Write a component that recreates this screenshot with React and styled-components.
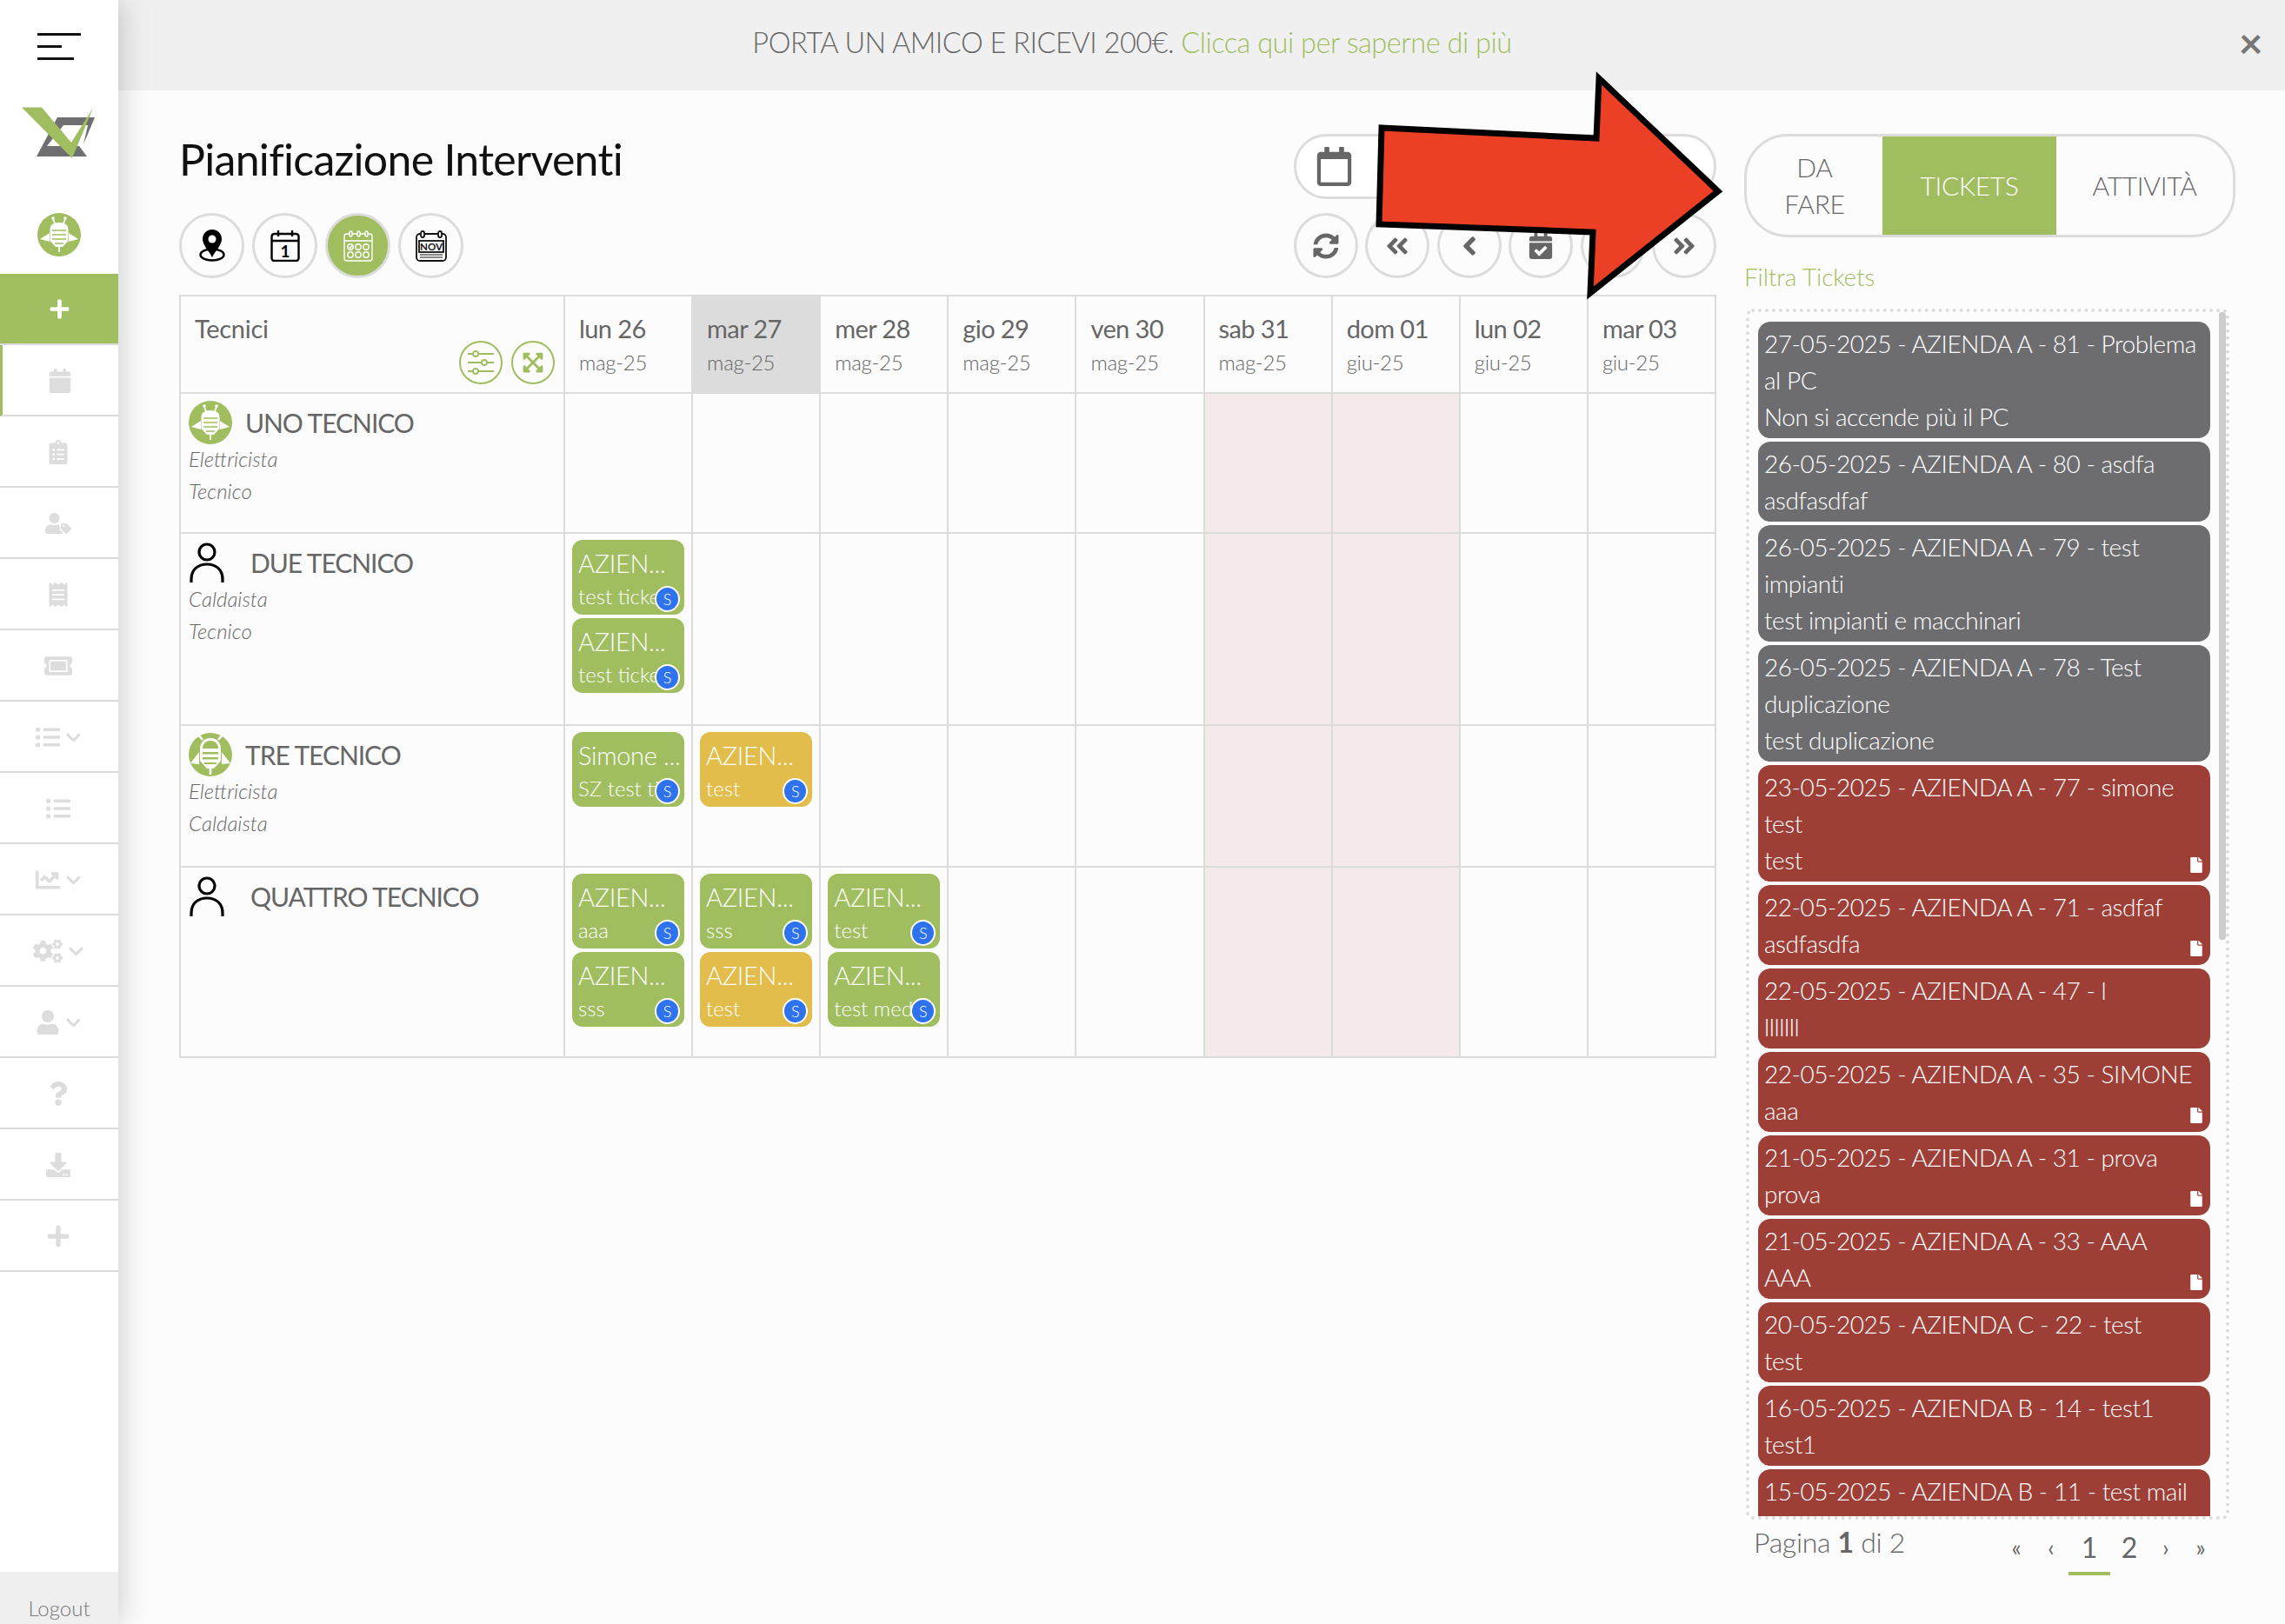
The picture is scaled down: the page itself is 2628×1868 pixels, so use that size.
import React from 'react'
import styled, { createGlobalStyle } from 'styled-components'
import {
  FaPlus, FaCalendar, FaClipboardList, FaUserTag, FaReceipt, FaTicketAlt, FaListUl,
  FaChevronDown, FaChartLine, FaCogs, FaUser, FaQuestion, FaDownload, FaSyncAlt,
  FaAngleDoubleLeft, FaAngleLeft, FaCalendarCheck, FaAngleRight, FaAngleDoubleRight,
  FaRegCalendar, FaExpandArrowsAlt, FaFile,
} from 'react-icons/fa'

const GREEN = '#a0be60'
const LINE = '#dcdcdc'
const TEXT = '#666666'

const GlobalStyle = createGlobalStyle`
  html, body { margin: 0; padding: 0; background: #fcfcfc; }
  * { box-sizing: border-box; }
  body { font-family: Lato, "Open Sans", sans-serif; font-weight: 300; color: ${TEXT}; overflow: hidden; }
`

const Page = styled.div`
  display: flex;
  width: 2628px;
  height: 1868px;
  overflow: hidden;
  position: relative;
`

/* sidebar */
const Sidebar = styled.aside`
  display: flex;
  flex-direction: column;
  flex: 0 0 136px;
  background: #fff;
  box-shadow: 0 0 34px rgba(0, 0, 0, 0.22);
  z-index: 2;
`

const SideTop = styled.div`
  display: flex;
  flex-direction: column;
  align-items: center;
  height: 315px;
  padding-top: 38px;
`

const Burger = styled.div`
  display: flex;
  flex-direction: column;
  gap: 11px;
  width: 50px;
  margin-bottom: 52px;
  span {
    display: block;
    height: 3px;
    background: #111;
  }
  span:nth-child(1) { width: 50px; }
  span:nth-child(2) { width: 28px; }
  span:nth-child(3) { width: 42px; }
`

const SideBee = styled.div`
  margin-top: 62px;
`

const SideAdd = styled.div`
  display: flex;
  align-items: center;
  justify-content: center;
  height: 82px;
  border-bottom: 2px solid ${LINE};
  background: ${GREEN};
  color: #fff;
  font-size: 25px;
`

const SideRow = styled.div`
  display: flex;
  align-items: center;
  justify-content: center;
  gap: 6px;
  height: 82px;
  padding: 2px 2px 0 0;
  border-bottom: 2px solid ${LINE};
  border-left: ${p => (p.$active ? `3px solid ${GREEN}` : '0')};
  color: #dddddd;
  font-size: ${p => p.$size || 28}px;
`

const Chevron = styled(FaChevronDown)`
  font-size: 19px;
`

const Logout = styled.div`
  margin-top: auto;
  height: 60px;
  padding-top: 28px;
  background: #efefef;
  text-align: center;
  font-size: 24px;
  line-height: 28px;
  color: #777;
`

/* main */
const Main = styled.div`
  flex: 1;
  display: flex;
  flex-direction: column;
  min-width: 0;
`

const Banner = styled.div`
  position: relative;
  flex: 0 0 104px;
  display: flex;
  align-items: center;
  justify-content: center;
  padding: 0 160px 8px 0;
  background: #f0f0f0;
  font-size: 32.5px;
  letter-spacing: -0.47px;
  color: #666;
  a { color: ${GREEN}; margin-left: 8px; }
`

const CloseBtn = styled.span`
  position: absolute;
  right: 26px;
  top: 24px;
  font-size: 48px;
  line-height: 50px;
  font-weight: 700;
  color: #777;
`

const Content = styled.div`
  flex: 1;
  display: flex;
  padding: 50px 57px 0 70px;
  gap: 32px;
`

const LeftCol = styled.div`
  flex: 0 0 1768px;
`

const TopBar = styled.div`
  display: flex;
  justify-content: space-between;
  align-items: center;
  height: 75px;
`

const Title = styled.h1`
  margin: 0 0 17px;
  font-size: 50px;
  font-weight: 400;
  letter-spacing: -0.7px;
  color: #111;
`

const DatePill = styled.div`
  display: flex;
  align-items: center;
  width: 486px;
  height: 75px;
  padding-left: 21px;
  border: 3px solid ${LINE};
  border-radius: 38px;
  background: #fff;
  color: ${TEXT};
  font-size: 45px;
`

const ToolBar = styled.div`
  display: flex;
  justify-content: space-between;
  margin: 16px 0 19px;
`

const BtnGroup = styled.div`
  display: flex;
  gap: ${p => p.$gap || 8}px;
`

const RoundBtn = styled.div`
  display: flex;
  align-items: center;
  justify-content: center;
  width: ${p => p.$w || 75}px;
  height: 75px;
  border: 3px solid ${LINE};
  border-radius: 50%;
  background: ${p => (p.$on ? GREEN : 'transparent')};
  color: ${TEXT};
  font-size: ${p => p.$size || 30}px;
`

/* planner table */
const Table = styled.table`
  width: 1768px;
  border-collapse: collapse;
  table-layout: fixed;
  td, th { border: 2px solid ${LINE}; padding: 0; vertical-align: top; }
`

const HeadCell = styled.th`
  height: 112px;
  padding: 19px 0 0 16px !important;
  text-align: left;
  font-weight: 400;
  background: ${p => (p.$today ? '#dcdcdc' : 'transparent')};
`

const TechHead = styled.th`
  position: relative;
  padding: 19px 0 0 16px !important;
  text-align: left;
  font-weight: 400;
  font-size: 29px;
  line-height: 36px;
  letter-spacing: -0.3px;
  color: ${TEXT};
`

const DayName = styled.div`
  font-size: 29px;
  line-height: 36px;
  font-weight: 400;
  letter-spacing: -0.6px;
  color: ${TEXT};
`

const DayMonth = styled.div`
  margin-top: 6px;
  font-size: 24px;
  line-height: 30px;
  font-weight: 300;
  letter-spacing: -0.3px;
  color: ${TEXT};
`

const HeadTools = styled.div`
  position: absolute;
  right: 10px;
  bottom: 9px;
  display: flex;
  gap: 10px;
`

const MiniBtn = styled.div`
  display: flex;
  align-items: center;
  justify-content: center;
  width: 50px;
  height: 50px;
  border: 2px solid ${GREEN};
  border-radius: 50%;
  color: ${GREEN};
  font-size: 26px;
`

const TechCell = styled.td`
  height: ${p => p.$h}px;
  padding: 8px 0 0 9px !important;
`

const TechName = styled.div`
  display: flex;
  align-items: center;
  gap: ${p => p.$gap}px;
  height: 50px;
  margin-bottom: -1px;
  padding-left: ${p => p.$indent || 0}px;
  font-size: 30px;
  font-weight: 400;
  letter-spacing: -1.05px;
  color: ${TEXT};
`

const Role = styled.div`
  font-size: 24px;
  line-height: 36.5px;
  font-style: italic;
  color: ${TEXT};
`

const DayCell = styled.td`
  padding: 7px 8px 0 !important;
  background: ${p => (p.$weekend ? '#f5eaea' : 'transparent')};
`

const Card = styled.div`
  position: relative;
  height: 86px;
  margin-bottom: 4px;
  padding: 9px 0 0 7px;
  border-radius: 12px;
  background: ${p => (p.$yellow ? '#e2bd4b' : GREEN)};
  color: #fff;
  overflow: hidden;
  white-space: nowrap;
`

const CardTitle = styled.div`
  font-size: 29px;
  line-height: 36px;
  letter-spacing: -0.3px;
`

const CardSub = styled.div`
  margin: 5px 22px 0 0;
  overflow: hidden;
  font-size: 24px;
  line-height: 30px;
`

const Badge = styled.span`
  position: absolute;
  right: 5px;
  bottom: 3px;
  display: flex;
  align-items: center;
  justify-content: center;
  width: 29px;
  height: 30px;
  border: 2px solid #fff;
  border-radius: 50%;
  background: #2f72ee;
  color: #fff;
  font-size: 18px;
  line-height: 1;
`

/* right column */
const RightCol = styled.div`
  flex: 0 0 565px;
  display: flex;
  flex-direction: column;
`

const Tabs = styled.div`
  display: flex;
  height: 119px;
  border: 3px solid ${LINE};
  border-radius: 50px;
  overflow: hidden;
`

const Tab = styled.div`
  display: flex;
  align-items: center;
  justify-content: center;
  flex: 0 0 ${p => p.$w}px;
  padding: 0 30px 1px;
  text-align: center;
  font-size: 30px;
  line-height: 42px;
  letter-spacing: -0.3px;
  background: ${p => (p.$on ? GREEN : 'transparent')};
  color: ${p => (p.$on ? '#fff' : TEXT)};
`

const FilterLabel = styled.div`
  margin: 27px 0 19px 0;
  font-size: 28px;
  line-height: 36px;
  letter-spacing: -0.1px;
  color: ${GREEN};
`

const TicketBox = styled.div`
  position: relative;
  width: 556px;
  height: 1393px;
  margin-left: 2px;
  padding: 11px 18px 0 10px;
  border: 4px dotted ${LINE};
  border-radius: 8px;
  overflow: hidden;
`

const Thumb = styled.div`
  position: absolute;
  top: 0;
  right: 0;
  width: 8px;
  height: 722px;
  border-radius: 3px;
  background: #cccccc;
`

const Ticket = styled.div`
  position: relative;
  margin-bottom: 4px;
  padding: 4px 6px 4px 7px;
  border-radius: 14px;
  background: ${p => (p.$late ? '#9e3f37' : '#6d6d6f')};
  color: #fff;
  font-size: 28px;
  line-height: 42px;
  letter-spacing: -0.45px;
`

const FileMark = styled(FaFile)`
  position: absolute;
  right: 7px;
  bottom: 10px;
  font-size: 18px;
`

const Footer = styled.div`
  display: flex;
  justify-content: space-between;
  padding: 3px 20px 0 11px;
`

const PageInfo = styled.div`
  font-size: 32px;
  line-height: 46px;
  letter-spacing: -0.3px;
  color: ${TEXT};
  b { font-weight: 700; }
`

const Pager = styled.div`
  display: flex;
  align-items: flex-start;
  margin-top: 9px;
`

const PageLink = styled.span`
  width: ${p => p.$w || 40}px;
  height: 52px;
  border-bottom: ${p => (p.$on ? `4px solid ${GREEN}` : '0')};
  text-align: center;
  font-size: ${p => (p.$num ? 32 : 26)}px;
  font-weight: 400;
  line-height: 40px;
  color: ${TEXT};
`

const Arrow = styled.svg`
  position: absolute;
  left: 0;
  top: 0;
  z-index: 3;
  pointer-events: none;
`

const Bee = ({ big }) => (
  big ? (
    <svg width="50" height="50" viewBox="0 0 50 50">
      <circle cx="25" cy="25" r="25" fill={GREEN} />
      <path d="M2 35 L12 22 V36 Z M48 35 L38 22 V36 Z" fill="#fff" />
      <path d="M25 6 C33 6 37 12 37 19 V32 L29 41 H21 L13 32 V19 C13 12 17 6 25 6 Z" fill="#fff" />
      <path d="M25 9 C31 9 34 13 34 18 H16 C16 13 19 9 25 9 Z M16 22 H34 V24.5 H16 Z M16 28 H34 V30.5 H16 Z M18 34 H32 V36 H18 Z" fill={GREEN} />
      <path d="M25 40 V48 M16 8 L11 2 M34 8 L39 2" stroke="#fff" strokeWidth="2.6" />
    </svg>
  ) : (
    <svg width="50" height="50" viewBox="0 0 50 50">
      <circle cx="25" cy="25" r="25" fill={GREEN} />
      <path d="M3 30 L14 23 V33 Z M47 30 L36 23 V33 Z" fill="#fff" />
      <path d="M25 11 C32 11 35.5 14 35.5 19 V32 L29 39 H21 L14.5 32 V19 C14.5 14 18 11 25 11 Z" fill="#fff" />
      <path d="M17 20 H33 M17 25 H33 M17 30 H33 M20 35 H30" stroke={GREEN} strokeWidth="1.6" />
      <path d="M25 39 V45 M20 12 L18 7 M30 12 L32 7" stroke="#fff" strokeWidth="1.8" />
      <circle cx="18" cy="6" r="1.8" fill="#fff" />
      <circle cx="32" cy="6" r="1.8" fill="#fff" />
    </svg>
  )
)

const Person = () => (
  <svg width="40" height="46" viewBox="0 0 40 46" fill="none" stroke="#000" strokeWidth="3.2">
    <circle cx="20" cy="11" r="9" />
    <path d="M2 46 V42 C2 31 10 25 20 25 C30 25 38 31 38 42 V46" />
  </svg>
)

const Logo = () => (
  <svg width="86" height="62" viewBox="24 120 86 62">
    <path d="M41 179 L65 134 H108 L95 165 L100 143 H72 L53 167 H90 L99 179 Z" fill="#6f6f71" />
    <path d="M24 122.5 H47 L81 163 L106 123 L82 181 Z" fill={GREEN} />
  </svg>
)

const PinIcon = () => (
  <svg width="30" height="37" viewBox="0 0 30 37">
    <ellipse cx="15" cy="29" rx="13.5" ry="6.5" fill="none" stroke="#000" strokeWidth="2.4" />
    <path d="M15 0 C8 0 4 5.5 4 11 C4 18 11 24 15 32 C19 24 26 18 26 11 C26 5.5 22 0 15 0 Z" fill="#000" />
    <circle cx="15" cy="11" r="4.5" fill="#fcfcfc" />
  </svg>
)

const DayIcon = () => (
  <svg width="34" height="36" viewBox="0 0 34 36" fill="none" stroke="#000" strokeWidth="2.4">
    <rect x="1.5" y="4" width="31" height="31" rx="3" />
    <path d="M1.5 12 H32.5 M9 0 V7 M25 0 V7" />
    <text x="17" y="31" fontSize="19" textAnchor="middle" fill="#000" stroke="none" fontFamily="Lato" fontWeight="700">1</text>
  </svg>
)

const MonthIcon = () => (
  <svg width="36" height="38" viewBox="0 0 36 38" fill="none" stroke="#fff" strokeWidth="1.4">
    <path d="M5 5 H31 Q34 5 34 8 V33 Q34 36 31 36 H5 Q2 36 2 33 V8 Q2 5 5 5 Z M2 13 H34" />
    <rect x="8" y="2" width="3" height="6" rx="1.5" fill={GREEN} />
    <rect x="17" y="2" width="3" height="6" rx="1.5" fill={GREEN} />
    <rect x="26" y="2" width="3" height="6" rx="1.5" fill={GREEN} />
    {[9, 18, 27].map(x => [20, 29].map(y => <circle key={`${x}-${y}`} cx={x} cy={y} r="3.2" />))}
    <path d="M7.5 20 L9 21.5 L11 18.5" />
  </svg>
)

const NovIcon = () => (
  <svg width="36" height="36" viewBox="0 0 36 36" fill="none" stroke="#111" strokeWidth="1.8">
    <rect x="1" y="4" width="34" height="31" rx="4" />
    <rect x="6" y="1" width="4" height="7" rx="2" fill="#fcfcfc" />
    <rect x="26" y="1" width="4" height="7" rx="2" fill="#fcfcfc" />
    <path d="M5 28 H31 M5 31 H31" strokeWidth="1.2" />
    <rect x="4" y="12" width="28" height="13" strokeWidth="1.8" />
    <text x="18" y="22.5" fontSize="11.5" fontWeight="700" textAnchor="middle" fill="#111" stroke="none" fontFamily="Lato">NOV</text>
  </svg>
)

const SlidersIcon = () => (
  <svg width="32" height="30" viewBox="0 0 32 30" fill="none" stroke={GREEN} strokeWidth="1.8">
    <path d="M1 5 H7 M13 5 H31 M1 15 H17 M23 15 H31 M1 25 H7 M13 25 H31" />
    <circle cx="10" cy="5" r="3" />
    <circle cx="20" cy="15" r="3" />
    <circle cx="10" cy="25" r="3" />
  </svg>
)

const days = [
  ['lun 26', 'mag-25'], ['mar 27', 'mag-25'], ['mer 28', 'mag-25'], ['gio 29', 'mag-25'], ['ven 30', 'mag-25'],
  ['sab 31', 'mag-25'], ['dom 01', 'giu-25'], ['lun 02', 'giu-25'], ['mar 03', 'giu-25'],
]

const technicians = [
  {
    name: 'UNO TECNICO', avatar: 'bee', roles: ['Elettricista', 'Tecnico'], height: 161,
    cards: {},
  },
  {
    name: 'DUE TECNICO', avatar: 'person', roles: ['Caldaista', 'Tecnico'], height: 221,
    cards: { 0: [['AZIEN...', 'test ticket'], ['AZIEN...', 'test ticket']] },
  },
  {
    name: 'TRE TECNICO', avatar: 'big', roles: ['Elettricista', 'Caldaista'], height: 163,
    cards: { 0: [['Simone ...', 'SZ test ticket']], 1: [['AZIEN...', 'test', true]] },
  },
  {
    name: 'QUATTRO TECNICO', avatar: 'person', roles: [], height: 219,
    cards: {
      0: [['AZIEN...', 'aaa'], ['AZIEN...', 'sss']],
      1: [['AZIEN...', 'sss'], ['AZIEN...', 'test', true]],
      2: [['AZIEN...', 'test'], ['AZIEN...', 'test medio']],
    },
  },
]

const tickets = [
  { title: '27-05-2025 - AZIENDA A - 81 - Problema al PC', sub: 'Non si accende più il PC' },
  { title: '26-05-2025 - AZIENDA A - 80 - asdfa', sub: 'asdfasdfaf' },
  { title: '26-05-2025 - AZIENDA A - 79 - test impianti', sub: 'test impianti e macchinari' },
  { title: '26-05-2025 - AZIENDA A - 78 - Test duplicazione', sub: 'test duplicazione' },
  { title: '23-05-2025 - AZIENDA A - 77 - simone test', sub: 'test', late: true, file: true },
  { title: '22-05-2025 - AZIENDA A - 71 - asdfaf', sub: 'asdfasdfa', late: true, file: true },
  { title: '22-05-2025 - AZIENDA A - 47 - l', sub: 'lllllll', late: true },
  { title: '22-05-2025 - AZIENDA A - 35 - SIMONE', sub: 'aaa', late: true, file: true },
  { title: '21-05-2025 - AZIENDA A - 31 - prova', sub: 'prova', late: true, file: true },
  { title: '21-05-2025 - AZIENDA A - 33 - AAA', sub: 'AAA', late: true, file: true },
  { title: '20-05-2025 - AZIENDA C - 22 - test', sub: 'test', late: true },
  { title: '16-05-2025 - AZIENDA B - 14 - test1', sub: 'test1', late: true },
  { title: '15-05-2025 - AZIENDA B - 11 - test mail', sub: 'test mail', late: true },
]

const App = () => (
  <Page>
    <GlobalStyle />
    <Sidebar>
      <SideTop>
        <Burger><span /><span /><span /></Burger>
        <Logo />
        <SideBee><Bee /></SideBee>
      </SideTop>
      <SideAdd><FaPlus /></SideAdd>
      <SideRow $active><FaCalendar /></SideRow>
      <SideRow><FaClipboardList /></SideRow>
      <SideRow $size={30}><FaUserTag /></SideRow>
      <SideRow><FaReceipt /></SideRow>
      <SideRow $size={32}><FaTicketAlt /></SideRow>
      <SideRow><FaListUl /><Chevron /></SideRow>
      <SideRow><FaListUl /></SideRow>
      <SideRow><FaChartLine /><Chevron /></SideRow>
      <SideRow $size={34}><FaCogs /><Chevron /></SideRow>
      <SideRow><FaUser /><Chevron /></SideRow>
      <SideRow><FaQuestion /></SideRow>
      <SideRow><FaDownload /></SideRow>
      <SideRow><FaPlus /></SideRow>
      <Logout>Logout</Logout>
    </Sidebar>

    <Main>
      <Banner>
        PORTA UN AMICO E RICEVI 200€.<a>Clicca qui per saperne di più</a>
        <CloseBtn>×</CloseBtn>
      </Banner>
      <Content>
        <LeftCol>
          <TopBar>
            <Title>Pianificazione Interventi</Title>
            <DatePill><FaRegCalendar /></DatePill>
          </TopBar>
          <ToolBar>
            <BtnGroup $gap={9}>
              <RoundBtn><PinIcon /></RoundBtn>
              <RoundBtn><DayIcon /></RoundBtn>
              <RoundBtn $on><MonthIcon /></RoundBtn>
              <RoundBtn><NovIcon /></RoundBtn>
            </BtnGroup>
            <BtnGroup $gap={8.4}>
              <RoundBtn $w={74}><FaSyncAlt /></RoundBtn>
              <RoundBtn $w={74}><FaAngleDoubleLeft /></RoundBtn>
              <RoundBtn $w={74} $size={34}><FaAngleLeft /></RoundBtn>
              <RoundBtn $w={74}><FaCalendarCheck /></RoundBtn>
              <RoundBtn $w={74} $size={34}><FaAngleRight /></RoundBtn>
              <RoundBtn $w={74}><FaAngleDoubleRight /></RoundBtn>
            </BtnGroup>
          </ToolBar>
          <Table>
            <colgroup>
              <col style={{ width: 442 }} />
              {days.map(d => <col key={d[0]} />)}
            </colgroup>
            <thead>
              <tr>
                <TechHead>
                  Tecnici
                  <HeadTools>
                    <MiniBtn><SlidersIcon /></MiniBtn>
                    <MiniBtn><FaExpandArrowsAlt /></MiniBtn>
                  </HeadTools>
                </TechHead>
                {days.map((d, i) => (
                  <HeadCell key={d[0]} $today={i === 1}>
                    <DayName>{d[0]}</DayName>
                    <DayMonth>{d[1]}</DayMonth>
                  </HeadCell>
                ))}
              </tr>
            </thead>
            <tbody>
              {technicians.map(t => (
                <tr key={t.name}>
                  <TechCell $h={t.height}>
                    <TechName $gap={t.avatar === 'person' ? 30 : 15} $indent={t.avatar === 'person' ? 1 : 0}>
                      {t.avatar === 'person' ? <Person /> : <Bee big={t.avatar === 'big'} />}
                      {t.name}
                    </TechName>
                    {t.roles.map(r => <Role key={r}>{r}</Role>)}
                  </TechCell>
                  {days.map((d, i) => (
                    <DayCell key={d[0]} $weekend={i === 5 || i === 6}>
                      {(t.cards[i] || []).map((c, k) => (
                        <Card key={k} $yellow={c[2]}>
                          <CardTitle>{c[0]}</CardTitle>
                          <CardSub>{c[1]}</CardSub>
                          <Badge>S</Badge>
                        </Card>
                      ))}
                    </DayCell>
                  ))}
                </tr>
              ))}
            </tbody>
          </Table>
        </LeftCol>

        <RightCol>
          <Tabs>
            <Tab $w={156}>DA FARE</Tab>
            <Tab $w={200} $on>TICKETS</Tab>
            <Tab $w={203}>ATTIVITÀ</Tab>
          </Tabs>
          <FilterLabel>Filtra Tickets</FilterLabel>
          <TicketBox>
            <Thumb />
            {tickets.map(t => (
              <Ticket key={t.title} $late={t.late}>
                <div>{t.title}</div>
                <div>{t.sub}</div>
                {t.file && <FileMark />}
              </Ticket>
            ))}
          </TicketBox>
          <Footer>
            <PageInfo>Pagina <b>1</b> di 2</PageInfo>
            <Pager>
              <PageLink>«</PageLink>
              <PageLink>‹</PageLink>
              <PageLink $num $on $w={48}>1</PageLink>
              <PageLink $num $w={44}>2</PageLink>
              <PageLink>›</PageLink>
              <PageLink>»</PageLink>
            </Pager>
          </Footer>
        </RightCol>
      </Content>
    </Main>

    <Arrow width="2628" height="1868">
      <polygon
        points="1589,147 1836,159 1839,90 1976,220 1829,337 1832,267 1586,258"
        fill="#eb4025"
        stroke="#000"
        strokeWidth="7"
        strokeLinejoin="miter"
      />
    </Arrow>
  </Page>
)

export default App
